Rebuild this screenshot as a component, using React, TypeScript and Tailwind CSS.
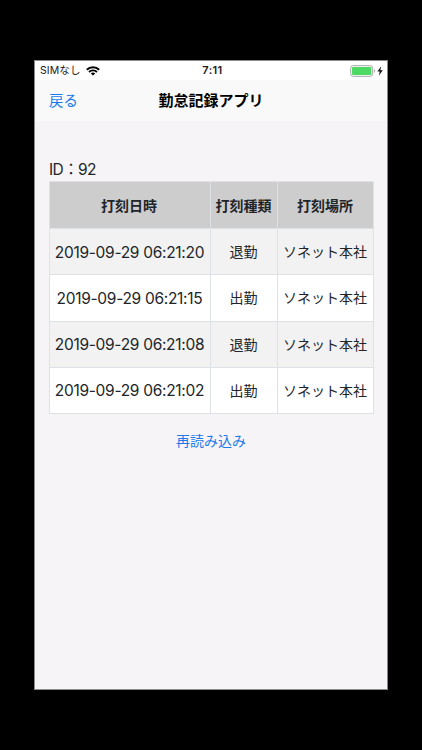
type PunchRecord = {
  time: string;
  kind: string;
  place: string;
};

const records: PunchRecord[] = [
  { time: "2019-09-29 06:21:20", kind: "退勤", place: "ソネット本社" },
  { time: "2019-09-29 06:21:15", kind: "出勤", place: "ソネット本社" },
  { time: "2019-09-29 06:21:08", kind: "退勤", place: "ソネット本社" },
  { time: "2019-09-29 06:21:02", kind: "出勤", place: "ソネット本社" },
];

// StatusBar
function StatusBar() {
  return (
    <div className="grid h-[19px] shrink-0 grid-cols-3 items-center bg-white pl-[5px] pr-[3px] text-[11px] leading-none text-[#1a1a1a]">
      <div className="flex items-center gap-[5px]">
        <span className="whitespace-nowrap pt-px text-[10.5px] tracking-[0.1px]">SIMなし</span>
        <svg width="14" height="10" viewBox="0 0 14 10" fill="none">
          <path d="M0.8 3.7a8.8 8.8 0 0 1 12.4 0" stroke="#000" strokeWidth="2" />
          <path d="M3 6a5.7 5.7 0 0 1 8 0" stroke="#000" strokeWidth="1.8" />
          <path d="M7 9.6 4.8 7.5a3.1 3.1 0 0 1 4.4 0Z" fill="#000" />
        </svg>
      </div>
      <span className="pl-px text-center text-[11px] font-semibold tracking-[0.4px]">7:11</span>
      <div className="flex items-center justify-end">
        <svg width="34" height="12" viewBox="0 0 34 12" fill="none">
          <rect x="0.7" y="0.7" width="22" height="10.6" rx="2.6" fill="#fff" stroke="#a5a5a5" />
          <rect x="2" y="2" width="19.4" height="8" rx="1.2" fill="#4cd964" />
          <path d="M24 4.2c1.4.5 1.4 3.1 0 3.6Z" fill="#a5a5a5" />
          <path d="M31.2 1.2 27.4 6.4h2.4l-1 4.3 4-5.5h-2.5Z" fill="#111" />
        </svg>
      </div>
    </div>
  );
}

// NavBar
function NavBar() {
  return (
    <div className="grid h-[41px] shrink-0 grid-cols-[1fr_auto_1fr] items-center bg-[#f9f9f9] px-[14px]">
      <button type="button" className="justify-self-start text-[14.5px] text-[#1c7bea]">
        戻る
      </button>
      <h1 className="pt-px text-[15px] font-bold text-black">勤怠記録アプリ</h1>
    </div>
  );
}

function App() {
  return (
    <div className="flex h-[750px] w-[422px] justify-center bg-black pt-[60px] font-['Inter','Noto_Sans_CJK_JP',sans-serif]">
      <div className="flex h-[630px] w-[354px] flex-col border border-[#8a8a8a] bg-[#f6f4f6]">
        <StatusBar />
        <NavBar />
        <main className="flex flex-col px-[14px] pt-[39px] text-[#212529]">
          <p className="h-[21px] text-[15.5px] leading-[20px] tracking-[-0.6px]">ID：92</p>
          <table className="w-[325px] table-fixed border-collapse text-center">
            <colgroup>
              <col className="w-[161px]" />
              <col className="w-[67px]" />
              <col className="w-[96px]" />
            </colgroup>
            <thead>
              <tr className="h-[47px] bg-[#cdcdcd] text-[14px]">
                <th className="whitespace-nowrap border border-[#dee2e6] p-0 pr-[2px] font-bold">打刻日時</th>
                <th className="whitespace-nowrap border border-[#dee2e6] p-0 pr-px font-bold">打刻種類</th>
                <th className="whitespace-nowrap border border-[#dee2e6] p-0 pr-px font-bold">打刻場所</th>
              </tr>
            </thead>
            <tbody>
              {records.map((record, index) => (
                <tr key={index} className="h-[46.25px] text-[14px] odd:bg-[#f2f2f2] even:bg-white">
                  <td className="whitespace-nowrap border border-[#dee2e6] p-0 pt-px pr-px text-[15.5px] tracking-[-0.3px]">
                    {record.time}
                  </td>
                  <td className="whitespace-nowrap border border-[#dee2e6] p-0 pr-px">{record.kind}</td>
                  <td className="whitespace-nowrap border border-[#dee2e6] p-0 pr-px">{record.place}</td>
                </tr>
              ))}
            </tbody>
          </table>
          <button type="button" className="mt-[16px] self-center text-[14px] leading-[21px] text-[#1c7bea]">
            再読み込み
          </button>
        </main>
      </div>
    </div>
  );
}

export default App;
